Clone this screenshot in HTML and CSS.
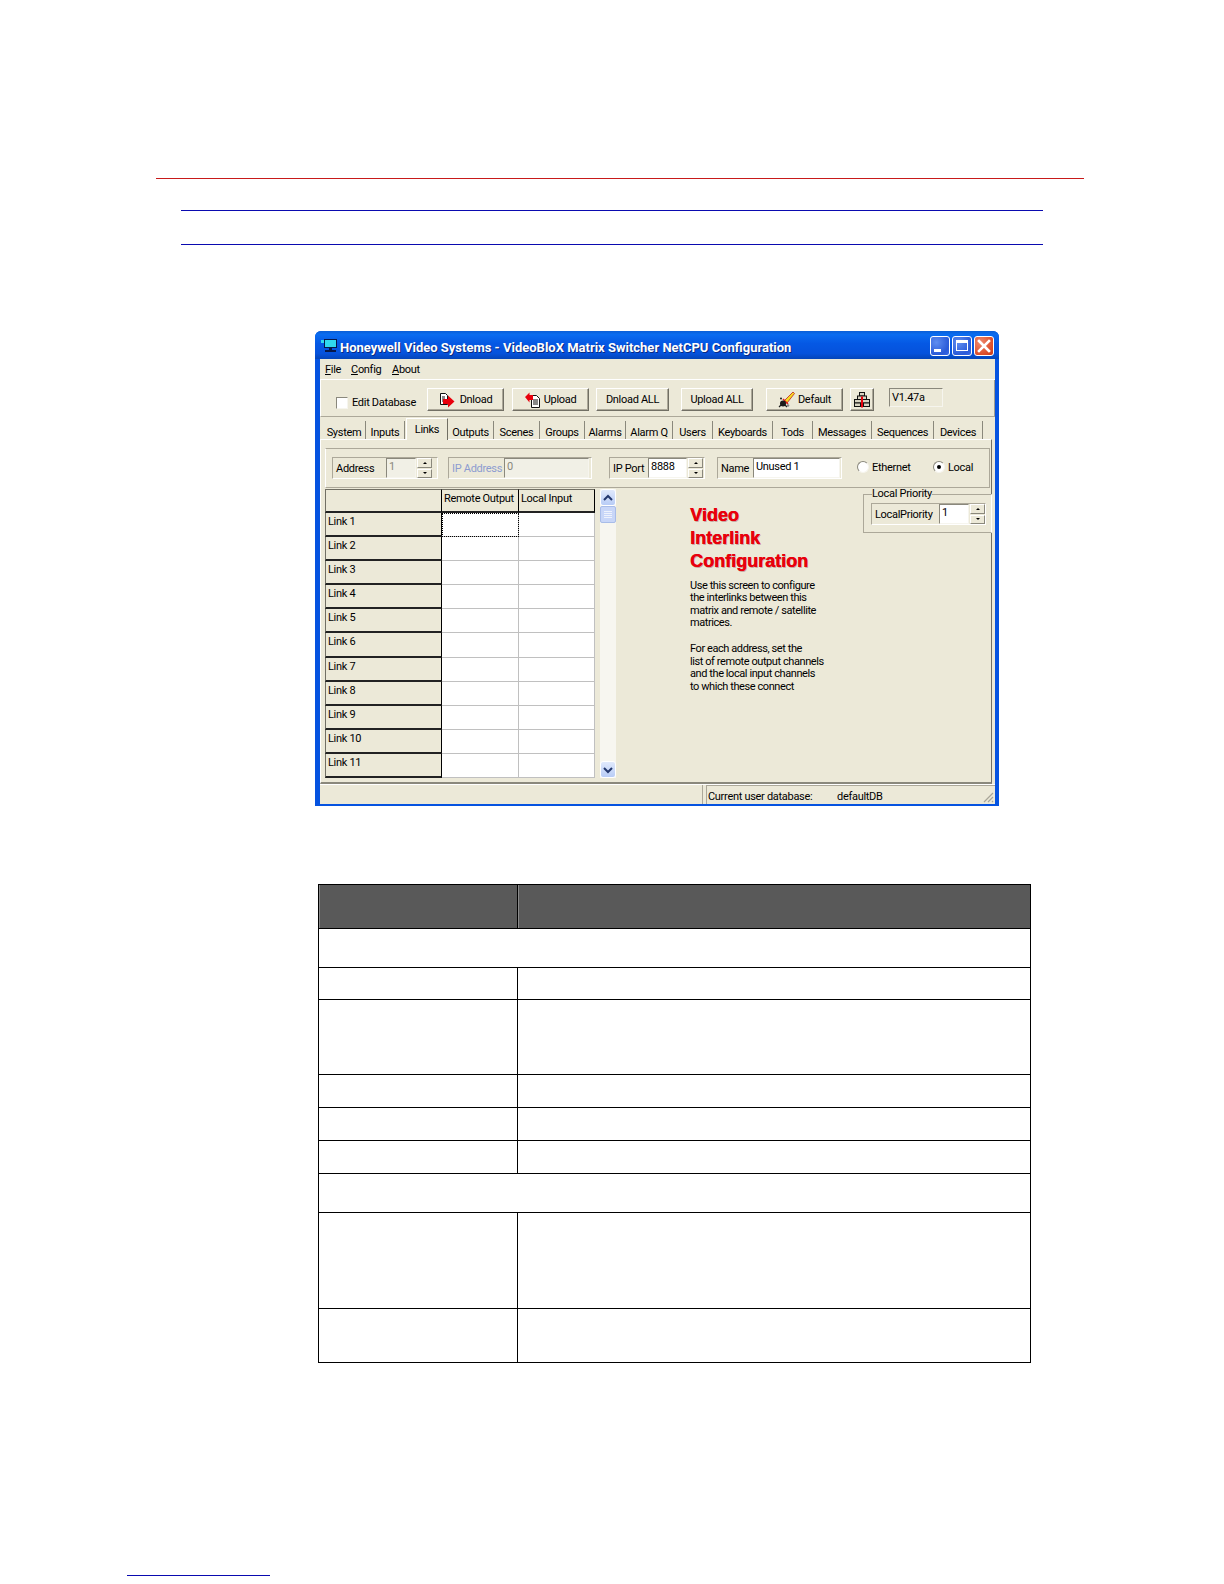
FILE: index.html
```html
<!DOCTYPE html>
<html lang="en">
<head>
<meta charset="utf-8">
<title>VideoBloX Links</title>
<link rel="stylesheet" href="styles.css">
</head>
<body>
<div class="page">
  <div class="rule-red"></div>
  <div class="rule-blue first"></div>
  <div class="rule-blue second"></div>

  <div class="window">
    <div class="titlebar">
      <svg class="app-icon" viewBox="0 0 16 13" width="16" height="13">
        <rect x="3" y="0" width="13" height="9" fill="#06184a"/>
        <rect x="4" y="1" width="11" height="7" fill="#30d8ee"/>
        <rect x="0" y="1" width="3" height="3" fill="#30d8ee"/>
        <rect x="8" y="9" width="3" height="2" fill="#06184a"/>
        <rect x="4" y="11" width="11" height="2" fill="#06184a"/>
      </svg>
      <span class="title-text">Honeywell Video Systems - VideoBloX Matrix Switcher NetCPU Configuration</span>
      <div class="caption-btns">
        <div class="cap cap-min"><span class="glyph-min"></span></div>
        <div class="cap cap-max"><span class="glyph-max"></span></div>
        <div class="cap cap-close">
          <svg viewBox="0 0 14 14" width="14" height="14"><path d="M2 2 L12 12 M12 2 L2 12" stroke="#fff" stroke-width="2.6" stroke-linecap="square"/></svg>
        </div>
      </div>
    </div>
    <div class="client">
      <div class="menubar">
        <span class="menu-file"><u>F</u>ile</span>
        <span class="menu-config"><u>C</u>onfig</span>
        <span class="menu-about"><u>A</u>bout</span>
      </div>
      <div class="toolbar">
        <span class="checkbox"></span>
        <span class="check-label">Edit Database</span>
        <div class="btn btn-dnload">
          <svg viewBox="0 0 16 16" width="16" height="16"><path d="M1.5 1.5h5l2 2v9h-7z" fill="#fff" stroke="#111"/><path d="M3 5h3M3 7h3M3 9h3" stroke="#111"/><path d="M4 7h5V3.500l6.500 6-6.500 6V12H4z" fill="#e8000c"/></svg>
          <span>Dnload</span>
        </div>
        <div class="btn btn-upload">
          <svg viewBox="0 0 16 16" width="16" height="16"><path d="M6.500 3.500h5l3 3v9h-8z" fill="#fff" stroke="#111"/><path d="M8 8h5M8 10h5M8 12h5" stroke="#111"/><path d="M0 5l4.500-4.500V3H8v5H4.500v2.500z" fill="#e8000c"/></svg>
          <span>Upload</span>
        </div>
        <div class="btn btn-dall"><span>Dnload ALL</span></div>
        <div class="btn btn-uall"><span>Upload ALL</span></div>
        <div class="btn btn-default">
          <svg viewBox="0 0 17 17" width="17" height="17"><path d="M6 10L15 1l1.500 1.500L9 12z" fill="#f4dc20" stroke="#c02020" stroke-width=".8"/><path d="M5 8l5 5" stroke="#e02020" stroke-width="1.500"/><circle cx="5" cy="12.500" r="3" fill="#1c1c1c"/><circle cx="3" cy="7.500" r="1" fill="#1c1c1c"/><path d="M1 16l3-3M9 16l-3-3" stroke="#1c1c1c" stroke-width="1.200"/><circle cx="10" cy="14.500" r="1.300" fill="#888"/></svg>
          <span>Default</span>
        </div>
        <div class="btn btn-icon">
          <svg viewBox="0 0 18 18" width="18" height="18"><g fill="#d8d4c2" stroke="#111"><rect x="6.500" y="1.500" width="5" height="3.500"/><rect x="4.500" y="5" width="9" height="3.500"/><rect x="1.500" y="8.500" width="15" height="3.500"/><rect x="1.500" y="12" width="6" height="3.500"/><rect x="10.500" y="12" width="6" height="3.500"/></g><path d="M9 5.500v11" stroke="#e8000c" stroke-width="2"/></svg>
        </div>
        <div class="version">V1.47a</div>
      </div>
      <div class="tabs">
        <span class="tab">System</span>
        <span class="tab">Inputs</span>
        <span class="tab active">Links</span>
        <span class="tab">Outputs</span>
        <span class="tab">Scenes</span>
        <span class="tab">Groups</span>
        <span class="tab">Alarms</span>
        <span class="tab">Alarm Q</span>
        <span class="tab">Users</span>
        <span class="tab">Keyboards</span>
        <span class="tab">Tods</span>
        <span class="tab">Messages</span>
        <span class="tab">Sequences</span>
        <span class="tab">Devices</span>
      </div>
      <div class="tabpage">
        <div class="fields">
          <div class="group g-address">
            <span class="lbl">Address</span>
            <span class="input i-address">1</span>
            <span class="spin"><i class="up"></i><i class="down"></i></span>
          </div>
          <div class="group g-ip">
            <span class="lbl disabled">IP Address</span>
            <span class="input i-ip">0</span>
          </div>
          <div class="group g-port">
            <span class="lbl">IP Port</span>
            <span class="input i-port">8888</span>
            <span class="spin"><i class="up"></i><i class="down"></i></span>
          </div>
          <div class="group g-name">
            <span class="lbl">Name</span>
            <span class="input i-name">Unused 1</span>
          </div>
          <div class="radio r-eth"><span class="dot"></span><span>Ethernet</span></div>
          <div class="radio r-local"><span class="dot on"></span><span>Local</span></div>
        </div>
        <div class="lower">
          <div class="grid">
            <div class="gh gh-corner"></div>
            <div class="gh">Remote Output</div>
            <div class="gh">Local Input</div>
            <div class="rh">Link 1</div><div class="cell focus"></div><div class="cell"></div>
            <div class="rh">Link 2</div><div class="cell"></div><div class="cell"></div>
            <div class="rh">Link 3</div><div class="cell"></div><div class="cell"></div>
            <div class="rh">Link 4</div><div class="cell"></div><div class="cell"></div>
            <div class="rh">Link 5</div><div class="cell"></div><div class="cell"></div>
            <div class="rh">Link 6</div><div class="cell"></div><div class="cell"></div>
            <div class="rh">Link 7</div><div class="cell"></div><div class="cell"></div>
            <div class="rh">Link 8</div><div class="cell"></div><div class="cell"></div>
            <div class="rh">Link 9</div><div class="cell"></div><div class="cell"></div>
            <div class="rh">Link 10</div><div class="cell"></div><div class="cell"></div>
            <div class="rh">Link 11</div><div class="cell"></div><div class="cell"></div>
          </div>
          <div class="scrollbar">
            <div class="sb-btn"><svg viewBox="0 0 10 8" width="10" height="8"><path d="M1 6l4-4 4 4" fill="none" stroke="#24386e" stroke-width="2"/></svg></div>
            <div class="sb-thumb"><span></span><span></span><span></span><span></span></div>
            <div class="sb-space"></div>
            <div class="sb-btn"><svg viewBox="0 0 10 8" width="10" height="8"><path d="M1 2l4 4 4-4" fill="none" stroke="#24386e" stroke-width="2"/></svg></div>
          </div>
          <div class="info">
            <h2>Video</h2>
            <h2>Interlink</h2>
            <h2>Configuration</h2>
            <p>Use this screen to configure<br>the interlinks between this<br>matrix and remote / satellite<br>matrices.</p>
            <p>For each address, set the<br>list of remote output channels<br>and the local input channels<br>to which these connect</p>
          </div>
          <fieldset class="priority">
            <legend>Local Priority</legend>
            <div class="group g-priority">
              <span class="lbl">LocalPriority</span>
              <span class="input i-priority">1</span>
              <span class="spin"><i class="up"></i><i class="down"></i></span>
            </div>
          </fieldset>
        </div>
      </div>
      <div class="statusbar">
        <div class="st-left"></div>
        <div class="st-right"><span class="st-a">Current user database:</span><span>defaultDB</span></div>
        <svg class="grip" viewBox="0 0 12 12" width="12" height="12"><path d="M11 2L2 11M11 6L6 11M11 10L10 11" stroke="#a8a598" stroke-width="1.2"/></svg>
      </div>
    </div>
  </div>

  <table class="spec">
    <tr class="r-head"><th class="c1"></th><th></th></tr>
    <tr class="r-section"><td colspan="2"></td></tr>
    <tr class="r-a"><td></td><td></td></tr>
    <tr class="r-b"><td></td><td></td></tr>
    <tr class="r-c"><td></td><td></td></tr>
    <tr class="r-c"><td></td><td></td></tr>
    <tr class="r-d"><td></td><td></td></tr>
    <tr class="r-section"><td colspan="2"></td></tr>
    <tr class="r-e"><td></td><td></td></tr>
    <tr class="r-f"><td></td><td></td></tr>
  </table>

  <div class="foot-rule"></div>
</div>
</body>
</html>
```

FILE: styles.css
```css
* { box-sizing: border-box; }
html, body { margin: 0; padding: 0; background: #fff; }
body { font-family: Roboto, "Liberation Sans", sans-serif; color: #000; }
.page { width: 1224px; height: 1584px; padding-top: 178px; overflow: hidden; }

.rule-red { height: 1px; margin-left: 156px; width: 928px; background: #c81a1a; }
.rule-blue { height: 1px; margin-left: 181px; width: 862px; background: #0a0ab0; }
.rule-blue.first { margin-top: 31px; }
.rule-blue.second { margin-top: 33px; }

.window {
  margin: 86px 0 0 315px; width: 684px; height: 475px;
  display: flex; flex-direction: column;
  background: #0553e0; border-radius: 6px 6px 0 0; overflow: hidden;
}
.titlebar {
  height: 28px; flex: none; display: flex; align-items: center; padding: 1px 5px 0 6px;
  background: linear-gradient(#0a5ed6 0, #0a6cf0 12%, #0558e4 45%, #0552dc 80%, #0445b8 100%);
}
.app-icon { flex: none; margin-right: 3px; }
.title-text {
  flex: 1; color: #fff; font-weight: bold; font-size: 13px; padding-top: 3px; white-space: nowrap; text-shadow: 1px 1px 0 #0a2a80;
}
.caption-btns { display: flex; gap: 2px; }
.cap { width: 20px; height: 20px; border: 1px solid #fff; border-radius: 3px; display: flex; align-items: center; justify-content: center; }
.cap-min, .cap-max { background: radial-gradient(circle at 30% 30%, #5f8df0, #2a5ad8 70%, #3a6ae8); }
.cap-close { background: radial-gradient(circle at 30% 30%, #ee8a70, #dc4c28 70%, #c83818); }
.glyph-min { width: 7px; height: 3px; background: #fff; margin: 10px 6px 0 0; }
.glyph-max { width: 12px; height: 11px; border: 1px solid #fff; border-top-width: 3px; }

.client {
  flex: 1; margin: 0 4px 2px 5px; background: #ece9d8; display: flex; flex-direction: column; min-height: 0;
  font-size: 11px; letter-spacing: -0.3px;
}
.menubar { height: 21px; flex: none; display: flex; align-items: center; padding-left: 5px; border-bottom: 1px solid #fff; }
.menu-file { width: 26px; }
.menu-config { width: 41px; }

.toolbar {
  height: 37px; flex: none; display: flex; align-items: flex-start; padding-left: 15px;
  border: 1px solid; border-color: transparent #a09d90 #aca899 #fff; border-top: 0;
}
.checkbox { width: 12px; height: 12px; margin-top: 17px; background: #fff; border: 1px solid; border-color: #8a887c #f6f5ee #f6f5ee #8a887c; }
.check-label { margin: 16px 10px 0 4px; width: 65px; white-space: nowrap; }
.btn {
  height: 23px; margin-top: 8px; display: flex; align-items: center; justify-content: center; gap: 3px;
  border: 1px solid; border-color: #fff #716f64 #716f64 #fff; background: #ece9d8;
  box-shadow: inset -1px -1px 0 #aca899;
}
.btn-dnload { width: 77px; gap: 5px; margin-right: 8px; }
.btn-upload { width: 77px; margin-right: 7px; }
.btn-dall { width: 73px; margin-right: 12px; }
.btn-uall { width: 72px; margin-right: 13px; }
.btn-default { width: 77px; margin-right: 7px; }
.btn-icon { width: 24px; margin-right: 15px; }
.version {
  width: 54px; height: 19px; margin-top: 8px; padding: 2px 0 0 2px; line-height: 14px;
  border: 1px solid; border-color: #8a887c #f6f5ee #f6f5ee #8a887c;
}

.tabs {
  height: 22px; flex: none; margin-left: 3px; padding-top: 4px;
  display: grid; grid-template-columns: 43px 39px 43px 46px 46px 45px 41px 47px 40px 60px 40px 59px 62px 49px;
}
.tab { text-align: center; padding-top: 5px; border-right: 1px solid #8a887c; white-space: nowrap; }
.tab.active {
  margin: -3px 0 0 1px; padding-top: 4px; height: 22px; background: #ece9d8; position: relative;
  border-left: 1px solid #fff; border-top: 1px solid #fff; border-right: 1px solid #716f64;
}

.tabpage {
  flex: 1; min-height: 0; display: flex; flex-direction: column; margin-right: 3px;
  border-top: 1px solid #fff; border-right: 1px solid #716f64; border-left: 1px solid #fff; border-bottom: 2px solid #8a887c;
}
.fields {
  height: 40px; flex: none; margin: 8px 1px 0 4px; padding: 8px 0 0 6px; display: flex; align-items: flex-start;
  border: 1px solid; border-color: #aca899 #aca899 #aca899 #fff;
}
.group {
  height: 22px; display: flex; align-items: center; padding-left: 3px;
  border: 1px solid; border-color: #aca899 #fff #fff #aca899;
}
.g-address { width: 106px; margin-right: 10px; }
.g-ip { width: 144px; margin-right: 17px; }
.g-port { width: 96px; margin-right: 12px; }
.g-name { width: 125px; margin-right: 15px; }
.lbl { flex: none; white-space: nowrap; }
.g-address .lbl { width: 50px; }
.g-ip .lbl { width: 52px; }
.g-port .lbl { width: 35px; }
.g-name .lbl { width: 32px; }
.g-priority .lbl { width: 64px; }
.lbl.disabled { color: #8c9cd0; }
.input {
  height: 20px; background: #fff; border: 1px solid; border-color: #8a887c #f6f5ee #f6f5ee #8a887c;
  padding-left: 2px; line-height: 16px; white-space: nowrap;
}
.input.i-address, .input.i-ip { background: #f1f0e6; color: #8a887c; }
.i-address { width: 30px; }
.i-ip { width: 85px; }
.i-port { width: 39px; }
.i-name { width: 87px; }
.i-priority { width: 31px; }
.spin { width: 15px; height: 20px; margin-left: 1px; display: flex; flex-direction: column; gap: 1px; }
.spin i {
  flex: 1; display: flex; align-items: center; justify-content: center; background: #ece9d8;
  border: 1px solid; border-color: #fff #8a887c #8a887c #fff;
}
.spin i::after { content: ""; border-left: 2px solid transparent; border-right: 2px solid transparent; }
.spin .up::after { border-bottom: 2px solid #000; }
.spin .down::after { border-top: 2px solid #000; }
.radio { display: flex; align-items: center; gap: 3px; height: 20px; }
.r-eth { width: 76px; }
.dot { width: 12px; height: 12px; border-radius: 50%; background: #fff; border: 1px solid; border-color: #8a887c #f6f5ee #f6f5ee #8a887c; position: relative; }
.dot.on::after { content: ""; position: absolute; left: 3px; top: 3px; width: 4px; height: 4px; border-radius: 50%; background: #000; }

.lower { flex: 1; min-height: 0; display: flex; align-items: flex-start; position: relative; margin-top: 1px; }
.grid {
  flex: none; margin-left: 4px; width: 270px; height: 289px; background: #fff;
  display: grid; grid-template-columns: 117px 77px 76px; grid-template-rows: 24px repeat(11, 1fr);
}
.gh, .rh { background: #ece9d8; border-right: 1px solid #000; border-bottom: 2px solid #222; padding: 2px 0 0 2px; white-space: nowrap; }
.gh { border-top: 1px solid #716f64; }
.rh { border-left: 1px solid #716f64; }
.gh-corner { border-left: 1px solid #716f64; }
.cell { border-right: 1px solid #c0c0c0; border-bottom: 1px solid #c0c0c0; }
.cell.focus { outline: 1px dotted #000; outline-offset: -1px; }
.scrollbar { flex: none; width: 16px; height: 289px; margin-left: 5px; background: #f7f6f0; display: flex; flex-direction: column; }
.sb-btn { height: 17px; flex: none; display: flex; align-items: center; justify-content: center; background: linear-gradient(#e0e9fc, #b8ccf6); border: 1px solid #fff; border-radius: 3px; }
.sb-thumb { height: 17px; flex: none; background: #c8d6f8; border: 1px solid #a8bce8; border-radius: 2px; display: flex; flex-direction: column; align-items: center; justify-content: center; gap: 1px; }
.sb-thumb span { width: 8px; height: 1px; background: #eef2fc; }
.sb-space { flex: 1; }
.info { flex: none; width: 200px; margin-left: 74px; padding-top: 15px; }
.info h2 { margin: 0; height: 23px; font-family: "Liberation Sans", sans-serif; font-size: 18px; line-height: 23px; font-weight: bold; color: #e8000c; letter-spacing: 0; text-shadow: 0.5px 0 0 #e8000c, 1px 1px 0 #c8a8a0; }
.info p { margin: 0 0 13.500px; line-height: 12.5px; letter-spacing: -0.42px; }
.info h2 + p { margin-top: 6.500px; }
.priority {
  position: absolute; left: 542px; top: -1px; width: 129px; height: 45px; margin: 0; padding: 0 5px 0 7px;
  border: 1px solid; border-color: #aca899 #fff #aca899 #aca899;
}
.priority legend { padding: 0; margin-left: 1px; line-height: 12px; }
.g-priority { width: 115px; margin-top: 3px; }
.statusbar { height: 20px; flex: none; display: flex; border-top: 1px solid #fff; position: relative; }
.st-left { width: 383px; border-right: 1px solid #aca899; }
.st-right { margin-left: 3px; flex: 1; padding: 4px 0 0 1px; border-left: 1px solid #aca899; border-top: 1px solid #aca899; }
.st-a { display: inline-block; width: 129px; }
.grip { position: absolute; right: 1px; bottom: 1px; }

.spec {
  margin: 78px 0 0 318px; width: 713px; border-collapse: collapse; table-layout: fixed;
}
.spec td, .spec th { border: 1px solid #000; padding: 0; }
.spec .c1 { width: 199px; }
.spec th { background: #595959; box-shadow: inset 1px 0 0 #8a8a8a; }
.r-head { height: 44px; }
.r-section { height: 39px; }
.r-a { height: 32px; }
.r-b { height: 75px; }
.r-c { height: 33px; }
.r-d { height: 33px; }
.r-e { height: 96px; }
.r-f { height: 54px; }

.foot-rule { margin: 212px 0 0 127px; width: 143px; height: 1px; background: #0a0ab0; }
```
